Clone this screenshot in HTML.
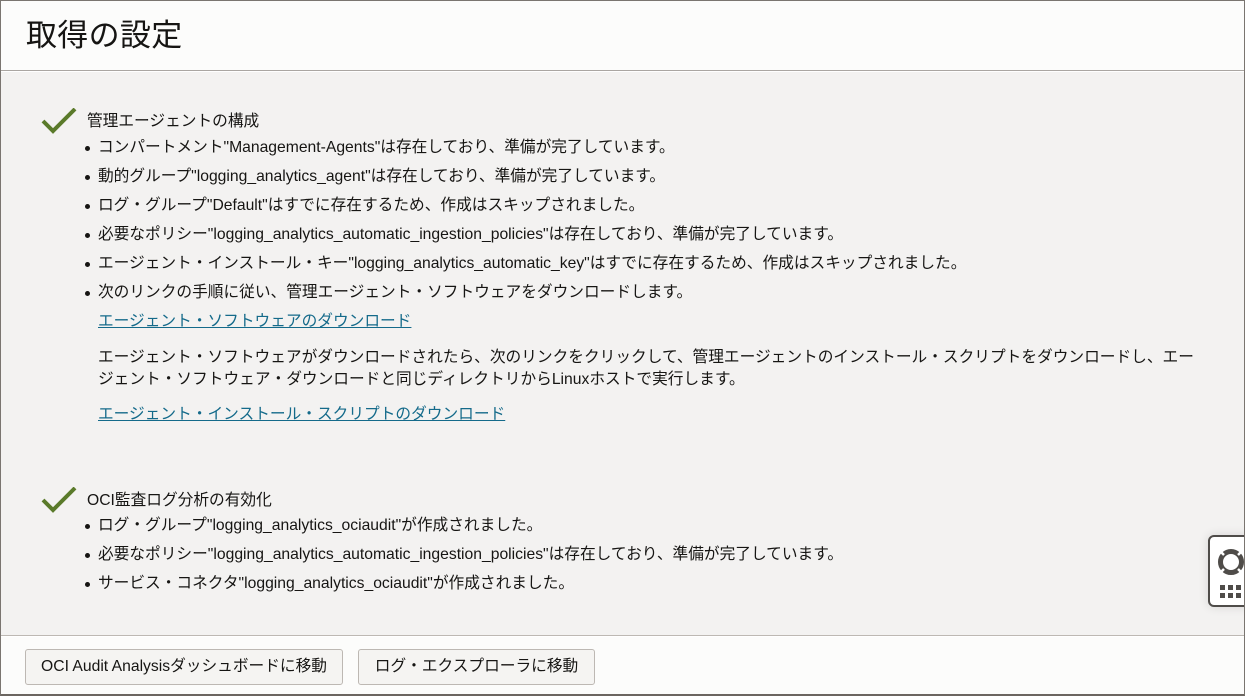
<!DOCTYPE html>
<html><head><meta charset="utf-8"><style>
*{margin:0;padding:0;box-sizing:border-box}
html,body{width:1245px;height:696px;overflow:hidden;background:#fff}
body{font-family:"Liberation Sans","Noto Sans CJK JP",sans-serif;color:#161513;position:relative}
.frame{position:absolute;left:0;top:0;width:1245px;height:696px;border:1px solid #7a7570;border-bottom:2px solid #6b6560}
.hdr{position:absolute;left:1px;top:1px;width:1243px;height:70px;background:#fcfcfb;border-bottom:1px solid #aaa6a2}
.hdr h1{position:absolute;left:25px;top:9px;font-size:31px;font-weight:normal;letter-spacing:0.3px}
.main{position:absolute;left:1px;top:72px;width:1243px;height:564px;background:#f3f2f1;border-bottom:1px solid #bdb8b3}
.sec{position:absolute;left:40px;font-size:15.7px}
.chk{position:absolute;left:0;top:-3px}
.ttl{position:absolute;left:46px;top:1px;white-space:nowrap;line-height:20px}
.li{position:absolute;left:57px;white-space:nowrap;line-height:20px}
.li:before{content:"";position:absolute;left:-13px;top:8px;width:5px;height:5px;border-radius:50%;background:#161513}
.p{position:absolute;left:57px;white-space:nowrap;line-height:20px}
a{color:#146a8a;text-decoration:underline}
.ftr{position:absolute;left:1px;top:637px;width:1243px;height:57px;background:#fcfcfb}
.btn{position:absolute;top:12px;height:36px;border:1px solid #bdb8b3;border-radius:3px;background:#f5f4f2;font-size:15.7px;line-height:34px;text-align:center;color:#161513}
.wid{position:absolute;left:1208px;top:535px;width:45px;height:72px;border:2px solid #4f4c49;border-radius:6px;background:#fff;box-shadow:0 0 10px rgba(0,0,0,.12)}
</style></head><body>
<div class="hdr"><h1>取得の設定</h1></div>
<div class="main">
 <div class="sec" style="top:39px">
  <svg class="chk" width="36" height="28" viewBox="0 0 36 28"><path d="M2 13 L12 23 L34 1" fill="none" stroke="#5a7a2a" stroke-width="4"/></svg>
  <div class="ttl">管理エージェントの構成</div>
  <div class="li" style="top:27px">コンパートメント"Management-Agents"は存在しており、準備が完了しています。</div>
  <div class="li" style="top:56px">動的グループ"logging_analytics_agent"は存在しており、準備が完了しています。</div>
  <div class="li" style="top:85px">ログ・グループ"Default"はすでに存在するため、作成はスキップされました。</div>
  <div class="li" style="top:114px">必要なポリシー"logging_analytics_automatic_ingestion_policies"は存在しており、準備が完了しています。</div>
  <div class="li" style="top:143px">エージェント・インストール・キー"logging_analytics_automatic_key"はすでに存在するため、作成はスキップされました。</div>
  <div class="li" style="top:172px">次のリンクの手順に従い、管理エージェント・ソフトウェアをダウンロードします。</div>
  <div class="p" style="top:201px"><a>エージェント・ソフトウェアのダウンロード</a></div>
  <div class="p" style="top:237px">エージェント・ソフトウェアがダウンロードされたら、次のリンクをクリックして、管理エージェントのインストール・スクリプトをダウンロードし、エー</div>
  <div class="p" style="top:259px">ジェント・ソフトウェア・ダウンロードと同じディレクトリからLinuxホストで実行します。</div>
  <div class="p" style="top:294px"><a>エージェント・インストール・スクリプトのダウンロード</a></div>
 </div>
 <div class="sec" style="top:418px">
  <svg class="chk" width="36" height="28" viewBox="0 0 36 28"><path d="M2 13 L12 23 L34 1" fill="none" stroke="#5a7a2a" stroke-width="4"/></svg>
  <div class="ttl">OCI監査ログ分析の有効化</div>
  <div class="li" style="top:26px">ログ・グループ"logging_analytics_ociaudit"が作成されました。</div>
  <div class="li" style="top:55px">必要なポリシー"logging_analytics_automatic_ingestion_policies"は存在しており、準備が完了しています。</div>
  <div class="li" style="top:84px">サービス・コネクタ"logging_analytics_ociaudit"が作成されました。</div>
 </div>
</div>
<div class="wid">
 <svg width="40" height="68" viewBox="0 0 40 68" style="position:absolute;left:0;top:0">
  <circle cx="21" cy="25" r="10.5" fill="none" stroke="#4f4c49" stroke-width="5"/>
  <g stroke="#fff" stroke-width="2.5">
   <line x1="14" y1="18" x2="10" y2="14"/><line x1="28" y1="18" x2="32" y2="14"/>
   <line x1="14" y1="32" x2="10" y2="36"/><line x1="28" y1="32" x2="32" y2="36"/>
  </g>
  <g fill="#4f4c49"><rect x="10" y="48" width="5" height="5"/><rect x="18" y="48" width="5" height="5"/><rect x="26" y="48" width="5" height="5"/><rect x="10" y="56" width="5" height="5"/><rect x="18" y="56" width="5" height="5"/><rect x="26" y="56" width="5" height="5"/></g>
 </svg>
</div>
<div class="ftr">
 <div class="btn" style="left:24px;width:318px">OCI Audit Analysisダッシュボードに移動</div>
 <div class="btn" style="left:357px;width:237px">ログ・エクスプローラに移動</div>
</div>
<div class="frame"></div>
</body></html>
